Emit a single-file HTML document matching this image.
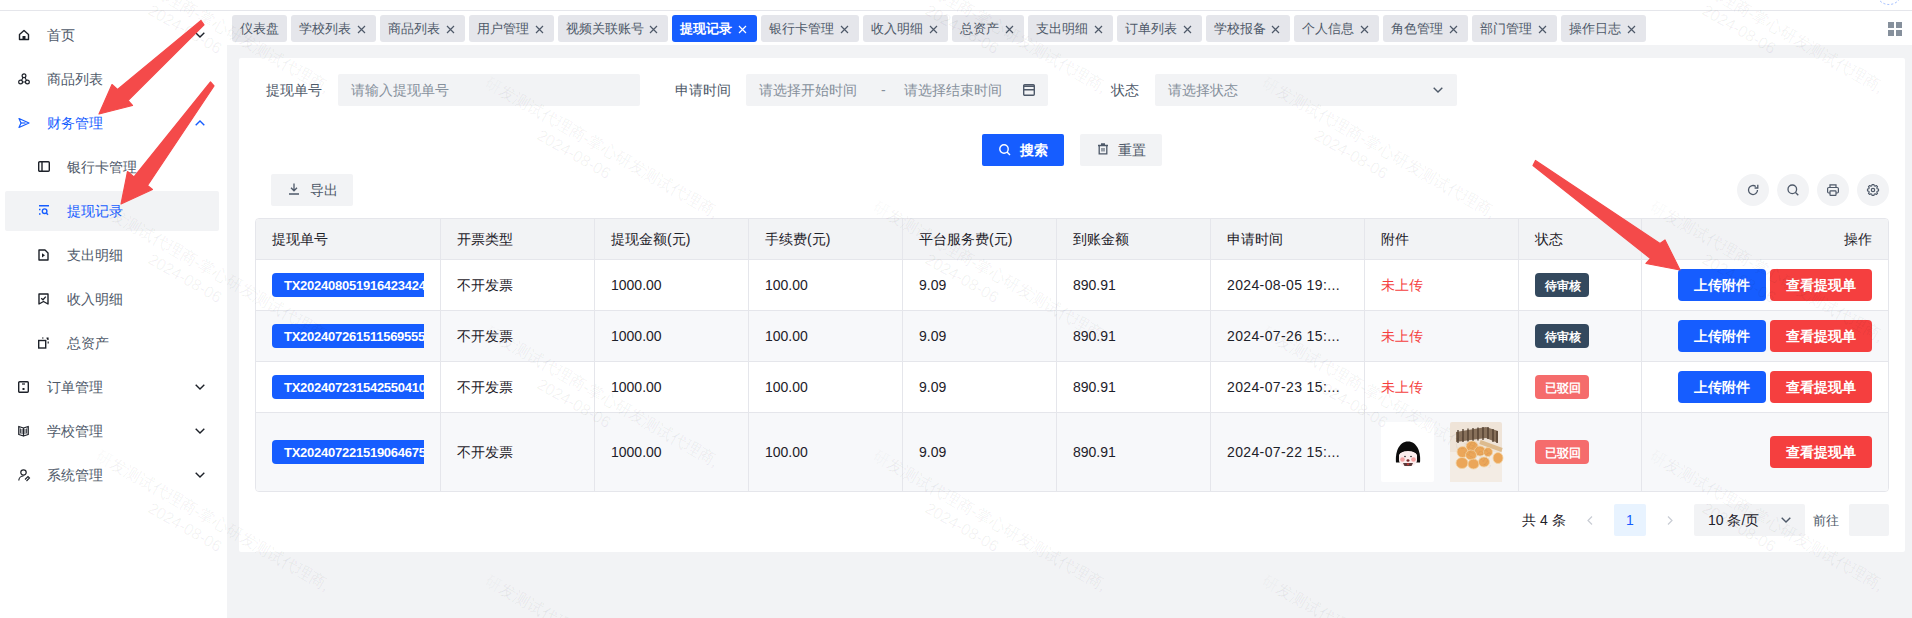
<!DOCTYPE html><html><head><meta charset="utf-8"><style>
*{box-sizing:border-box;margin:0;padding:0}
html,body{width:1912px;height:618px;overflow:hidden;background:#fff;font-family:"Liberation Sans",sans-serif;color:#1D2129}
.ab{position:absolute}
.t{position:absolute;white-space:nowrap;line-height:1}
svg{position:absolute;overflow:visible}
</style></head><body>

<div class="ab" style="left:0;top:10px;width:1912px;height:1px;background:#E5E6EB"></div>
<div class="ab" style="left:227px;top:45px;width:1685px;height:573px;background:#F2F3F5"></div>
<div class="ab" style="left:239px;top:58px;width:1666px;height:494px;background:#fff;border-radius:2px"></div>
<svg style="left:1870px;top:-30px" width="40" height="40" viewBox="0 0 40 40"><circle cx="19" cy="21.5" r="13" fill="none" stroke="#9DBBFF" stroke-width="1" stroke-dasharray="2 2"/></svg>
<div class="ab" style="left:5px;top:191px;width:214px;height:40px;background:#F2F3F5;border-radius:2px"></div>
<svg style="left:18px;top:29px" width="12" height="12" viewBox="0 0 12 12"><path d="M1.5 5.5 6 1.5l4.5 4v5h-9z" fill="none" stroke="#1D2129" stroke-width="1.4" stroke-linejoin="round"/><rect x="4.5" y="7" width="3" height="3.5" fill="#1D2129"/></svg>
<div class="t" style="left:47px;top:28px;font-size:14px;color:#4E5969">首页</div>
<svg style="left:195px;top:32px" width="10" height="6" viewBox="0 0 10 6"><path d="M0.7 0.7 5 5 9.3 0.7" fill="none" stroke="#1D2129" stroke-width="1.4"/></svg>
<svg style="left:18px;top:73px" width="12" height="12" viewBox="0 0 12 12"><path d="M6 2.5 3 8.5M6 2.5 9 8.5M3 9h6" stroke="#1D2129" stroke-width="1.1"/><circle cx="6" cy="2.8" r="1.9" fill="#fff" stroke="#1D2129" stroke-width="1.2"/><circle cx="2.6" cy="9" r="1.9" fill="#fff" stroke="#1D2129" stroke-width="1.2"/><circle cx="9.4" cy="9" r="1.9" fill="#fff" stroke="#1D2129" stroke-width="1.2"/></svg>
<div class="t" style="left:47px;top:72px;font-size:14px;color:#4E5969">商品列表</div>
<svg style="left:18px;top:117px" width="12" height="12" viewBox="0 0 12 12"><path d="M1 1.5 11 6 1 10.5 3 6z" fill="none" stroke="#165DFF" stroke-width="1.2" stroke-linejoin="round"/><path d="M3 6h4.5" stroke="#165DFF" stroke-width="1.2"/></svg>
<div class="t" style="left:47px;top:116px;font-size:14px;color:#165DFF">财务管理</div>
<svg style="left:195px;top:120px" width="10" height="6" viewBox="0 0 10 6"><path d="M0.7 5.3 5 1 9.3 5.3" fill="none" stroke="#165DFF" stroke-width="1.4"/></svg>
<svg style="left:38px;top:161px" width="12" height="12" viewBox="0 0 12 12"><rect x="0.7" y="0.7" width="10.6" height="9.6" rx="1" fill="none" stroke="#1D2129" stroke-width="1.4"/><path d="M4 1v9" stroke="#1D2129" stroke-width="1.4"/></svg>
<div class="t" style="left:67px;top:160px;font-size:14px;color:#4E5969">银行卡管理</div>
<svg style="left:38px;top:205px" width="12" height="12" viewBox="0 0 12 12"><path d="M1 0.8h10M1 4.5h1.5M1 9h1.5" stroke="#165DFF" stroke-width="1.4"/><circle cx="6.6" cy="6.2" r="2.3" fill="none" stroke="#165DFF" stroke-width="1.4"/><path d="M8.3 8 10 9.7" stroke="#165DFF" stroke-width="1.4"/></svg>
<div class="t" style="left:67px;top:204px;font-size:14px;color:#165DFF">提现记录</div>
<svg style="left:38px;top:249px" width="12" height="12" viewBox="0 0 12 12"><path d="M1 1h6l3 3v7H1z" fill="none" stroke="#1D2129" stroke-width="1.4" stroke-linejoin="round"/><path d="M4 4.2v4.2l3-2.1z" fill="#1D2129"/></svg>
<div class="t" style="left:67px;top:248px;font-size:14px;color:#4E5969">支出明细</div>
<svg style="left:38px;top:293px" width="12" height="12" viewBox="0 0 12 12"><path d="M1 1h9v10L5.5 8.5 1 11z" fill="none" stroke="#1D2129" stroke-width="1.4" stroke-linejoin="round"/><path d="M3.2 5.2 5 6.8 7.8 3.6" fill="none" stroke="#1D2129" stroke-width="1.3"/></svg>
<div class="t" style="left:67px;top:292px;font-size:14px;color:#4E5969">收入明细</div>
<svg style="left:38px;top:337px" width="12" height="12" viewBox="0 0 12 12"><rect x="0.7" y="3.5" width="7" height="7.5" fill="none" stroke="#1D2129" stroke-width="1.4"/><path d="M4 1h1.5M8.5 1h1.5v2M10.2 4.5v2" stroke="#1D2129" stroke-width="1.2"/></svg>
<div class="t" style="left:67px;top:336px;font-size:14px;color:#4E5969">总资产</div>
<svg style="left:18px;top:381px" width="12" height="12" viewBox="0 0 12 12"><rect x="0.7" y="0.7" width="9.6" height="10.6" rx="1" fill="none" stroke="#1D2129" stroke-width="1.4"/><path d="M4 3h3" stroke="#1D2129" stroke-width="1.2"/><rect x="4.5" y="7" width="2" height="2" fill="#1D2129"/></svg>
<div class="t" style="left:47px;top:380px;font-size:14px;color:#4E5969">订单管理</div>
<svg style="left:195px;top:384px" width="10" height="6" viewBox="0 0 10 6"><path d="M0.7 0.7 5 5 9.3 0.7" fill="none" stroke="#1D2129" stroke-width="1.4"/></svg>
<svg style="left:18px;top:425px" width="12" height="12" viewBox="0 0 12 12"><path d="M0.8 1.5 5.5 3v8L0.8 9.5zM10.2 1.5 5.5 3v8l4.7-1.5z" fill="none" stroke="#1D2129" stroke-width="1.3" stroke-linejoin="round"/><path d="M2.5 3.5v5M4 4v5M7 4v5M8.5 3.5v5" stroke="#1D2129" stroke-width="0.8"/></svg>
<div class="t" style="left:47px;top:424px;font-size:14px;color:#4E5969">学校管理</div>
<svg style="left:195px;top:428px" width="10" height="6" viewBox="0 0 10 6"><path d="M0.7 0.7 5 5 9.3 0.7" fill="none" stroke="#1D2129" stroke-width="1.4"/></svg>
<svg style="left:18px;top:469px" width="12" height="12" viewBox="0 0 12 12"><circle cx="5.5" cy="3.5" r="2.7" fill="none" stroke="#1D2129" stroke-width="1.2"/><path d="M0.8 11.5c0-2.5 2-4.5 4.7-4.5" fill="none" stroke="#1D2129" stroke-width="1.2"/><path d="M7 10.5l3-3 1.5 1.5-3 3" fill="none" stroke="#1D2129" stroke-width="1.1"/></svg>
<div class="t" style="left:47px;top:468px;font-size:14px;color:#4E5969">系统管理</div>
<svg style="left:195px;top:472px" width="10" height="6" viewBox="0 0 10 6"><path d="M0.7 0.7 5 5 9.3 0.7" fill="none" stroke="#1D2129" stroke-width="1.4"/></svg>
<div class="ab" style="left:232px;top:15px;width:55px;height:27px;background:#E5E6EB;border-radius:3px"></div>
<div class="t" style="left:240px;top:22px;font-size:13px;color:#4E5969;font-weight:normal">仪表盘</div>
<div class="ab" style="left:291px;top:15px;width:85px;height:27px;background:#E5E6EB;border-radius:3px"></div>
<div class="t" style="left:299px;top:22px;font-size:13px;color:#4E5969;font-weight:normal">学校列表</div>
<svg style="left:357px;top:25px" width="9" height="9" viewBox="0 0 9 9"><path d="M1 1 8 8M8 1 1 8" stroke="#4E5969" stroke-width="1.2"/></svg>
<div class="ab" style="left:380px;top:15px;width:85px;height:27px;background:#E5E6EB;border-radius:3px"></div>
<div class="t" style="left:388px;top:22px;font-size:13px;color:#4E5969;font-weight:normal">商品列表</div>
<svg style="left:446px;top:25px" width="9" height="9" viewBox="0 0 9 9"><path d="M1 1 8 8M8 1 1 8" stroke="#4E5969" stroke-width="1.2"/></svg>
<div class="ab" style="left:469px;top:15px;width:85px;height:27px;background:#E5E6EB;border-radius:3px"></div>
<div class="t" style="left:477px;top:22px;font-size:13px;color:#4E5969;font-weight:normal">用户管理</div>
<svg style="left:535px;top:25px" width="9" height="9" viewBox="0 0 9 9"><path d="M1 1 8 8M8 1 1 8" stroke="#4E5969" stroke-width="1.2"/></svg>
<div class="ab" style="left:558px;top:15px;width:110px;height:27px;background:#E5E6EB;border-radius:3px"></div>
<div class="t" style="left:566px;top:22px;font-size:13px;color:#4E5969;font-weight:normal">视频关联账号</div>
<svg style="left:649px;top:25px" width="9" height="9" viewBox="0 0 9 9"><path d="M1 1 8 8M8 1 1 8" stroke="#4E5969" stroke-width="1.2"/></svg>
<div class="ab" style="left:672px;top:15px;width:85px;height:27px;background:#165DFF;border-radius:3px"></div>
<div class="t" style="left:680px;top:22px;font-size:13px;color:#fff;font-weight:bold">提现记录</div>
<svg style="left:738px;top:25px" width="9" height="9" viewBox="0 0 9 9"><path d="M1 1 8 8M8 1 1 8" stroke="#fff" stroke-width="1.2"/></svg>
<div class="ab" style="left:761px;top:15px;width:98px;height:27px;background:#E5E6EB;border-radius:3px"></div>
<div class="t" style="left:769px;top:22px;font-size:13px;color:#4E5969;font-weight:normal">银行卡管理</div>
<svg style="left:840px;top:25px" width="9" height="9" viewBox="0 0 9 9"><path d="M1 1 8 8M8 1 1 8" stroke="#4E5969" stroke-width="1.2"/></svg>
<div class="ab" style="left:863px;top:15px;width:85px;height:27px;background:#E5E6EB;border-radius:3px"></div>
<div class="t" style="left:871px;top:22px;font-size:13px;color:#4E5969;font-weight:normal">收入明细</div>
<svg style="left:929px;top:25px" width="9" height="9" viewBox="0 0 9 9"><path d="M1 1 8 8M8 1 1 8" stroke="#4E5969" stroke-width="1.2"/></svg>
<div class="ab" style="left:952px;top:15px;width:72px;height:27px;background:#E5E6EB;border-radius:3px"></div>
<div class="t" style="left:960px;top:22px;font-size:13px;color:#4E5969;font-weight:normal">总资产</div>
<svg style="left:1005px;top:25px" width="9" height="9" viewBox="0 0 9 9"><path d="M1 1 8 8M8 1 1 8" stroke="#4E5969" stroke-width="1.2"/></svg>
<div class="ab" style="left:1028px;top:15px;width:85px;height:27px;background:#E5E6EB;border-radius:3px"></div>
<div class="t" style="left:1036px;top:22px;font-size:13px;color:#4E5969;font-weight:normal">支出明细</div>
<svg style="left:1094px;top:25px" width="9" height="9" viewBox="0 0 9 9"><path d="M1 1 8 8M8 1 1 8" stroke="#4E5969" stroke-width="1.2"/></svg>
<div class="ab" style="left:1117px;top:15px;width:85px;height:27px;background:#E5E6EB;border-radius:3px"></div>
<div class="t" style="left:1125px;top:22px;font-size:13px;color:#4E5969;font-weight:normal">订单列表</div>
<svg style="left:1183px;top:25px" width="9" height="9" viewBox="0 0 9 9"><path d="M1 1 8 8M8 1 1 8" stroke="#4E5969" stroke-width="1.2"/></svg>
<div class="ab" style="left:1206px;top:15px;width:84px;height:27px;background:#E5E6EB;border-radius:3px"></div>
<div class="t" style="left:1214px;top:22px;font-size:13px;color:#4E5969;font-weight:normal">学校报备</div>
<svg style="left:1271px;top:25px" width="9" height="9" viewBox="0 0 9 9"><path d="M1 1 8 8M8 1 1 8" stroke="#4E5969" stroke-width="1.2"/></svg>
<div class="ab" style="left:1294px;top:15px;width:85px;height:27px;background:#E5E6EB;border-radius:3px"></div>
<div class="t" style="left:1302px;top:22px;font-size:13px;color:#4E5969;font-weight:normal">个人信息</div>
<svg style="left:1360px;top:25px" width="9" height="9" viewBox="0 0 9 9"><path d="M1 1 8 8M8 1 1 8" stroke="#4E5969" stroke-width="1.2"/></svg>
<div class="ab" style="left:1383px;top:15px;width:85px;height:27px;background:#E5E6EB;border-radius:3px"></div>
<div class="t" style="left:1391px;top:22px;font-size:13px;color:#4E5969;font-weight:normal">角色管理</div>
<svg style="left:1449px;top:25px" width="9" height="9" viewBox="0 0 9 9"><path d="M1 1 8 8M8 1 1 8" stroke="#4E5969" stroke-width="1.2"/></svg>
<div class="ab" style="left:1472px;top:15px;width:85px;height:27px;background:#E5E6EB;border-radius:3px"></div>
<div class="t" style="left:1480px;top:22px;font-size:13px;color:#4E5969;font-weight:normal">部门管理</div>
<svg style="left:1538px;top:25px" width="9" height="9" viewBox="0 0 9 9"><path d="M1 1 8 8M8 1 1 8" stroke="#4E5969" stroke-width="1.2"/></svg>
<div class="ab" style="left:1561px;top:15px;width:85px;height:27px;background:#E5E6EB;border-radius:3px"></div>
<div class="t" style="left:1569px;top:22px;font-size:13px;color:#4E5969;font-weight:normal">操作日志</div>
<svg style="left:1627px;top:25px" width="9" height="9" viewBox="0 0 9 9"><path d="M1 1 8 8M8 1 1 8" stroke="#4E5969" stroke-width="1.2"/></svg>
<svg style="left:1888px;top:22px" width="14" height="14" viewBox="0 0 14 14"><g fill="#86909C"><rect x="0" y="0" width="6" height="6"/><rect x="8" y="0" width="6" height="6"/><rect x="0" y="8" width="6" height="6"/><rect x="8" y="8" width="6" height="6"/></g></svg>
<div class="t" style="left:266px;top:83px;font-size:14px;color:#4E5969">提现单号</div>
<div class="t" style="left:675px;top:83px;font-size:14px;color:#4E5969">申请时间</div>
<div class="t" style="left:1111px;top:83px;font-size:14px;color:#4E5969">状态</div>
<div class="ab" style="left:338px;top:74px;width:302px;height:32px;background:#F2F3F5;border-radius:2px"></div>
<div class="t" style="left:351px;top:83px;font-size:14px;color:#86909C">请输入提现单号</div>
<div class="ab" style="left:746px;top:74px;width:302px;height:32px;background:#F2F3F5;border-radius:2px"></div>
<div class="t" style="left:759px;top:83px;font-size:14px;color:#86909C">请选择开始时间</div>
<div class="t" style="left:881px;top:83px;font-size:14px;color:#86909C">-</div>
<div class="t" style="left:904px;top:83px;font-size:14px;color:#86909C">请选择结束时间</div>
<svg style="left:1023px;top:84px" width="12" height="12" viewBox="0 0 12 12"><rect x="0.7" y="0.7" width="10.6" height="10.6" rx="1" fill="none" stroke="#4E5969" stroke-width="1.4"/><path d="M1 5.8h10M0.7 2.2h10.6" stroke="#4E5969" stroke-width="1.4"/></svg>
<div class="ab" style="left:1155px;top:74px;width:302px;height:32px;background:#F2F3F5;border-radius:2px"></div>
<div class="t" style="left:1168px;top:83px;font-size:14px;color:#86909C">请选择状态</div>
<svg style="left:1433px;top:87px" width="10" height="6" viewBox="0 0 10 6"><path d="M0.7 0.7 5 5 9.3 0.7" fill="none" stroke="#4E5969" stroke-width="1.4"/></svg>
<div class="ab" style="left:982px;top:134px;width:82px;height:32px;background:#165DFF;border-radius:2px"></div>
<svg style="left:999px;top:144px" width="12" height="12" viewBox="0 0 12 12"><circle cx="5" cy="5" r="4.2" fill="none" stroke="#fff" stroke-width="1.4"/><path d="M8 8l3 3" stroke="#fff" stroke-width="1.4"/></svg>
<div class="t" style="left:1020px;top:143px;font-size:14px;color:#fff;font-weight:bold">搜索</div>
<div class="ab" style="left:1080px;top:134px;width:82px;height:32px;background:#F2F3F5;border-radius:2px"></div>
<svg style="left:1097px;top:143px" width="12" height="12" viewBox="0 0 12 12"><path d="M1 2.5h10M4 1h4" stroke="#4E5969" stroke-width="1.3"/><path d="M2.2 2.5v8.3h7.6V2.5" fill="none" stroke="#4E5969" stroke-width="1.3"/><path d="M5 5v3.5M7 5v3.5" stroke="#4E5969" stroke-width="1.1"/></svg>
<div class="t" style="left:1118px;top:143px;font-size:14px;color:#4E5969">重置</div>
<div class="ab" style="left:271px;top:174px;width:82px;height:32px;background:#F2F3F5;border-radius:2px"></div>
<svg style="left:288px;top:183px" width="12" height="12" viewBox="0 0 12 12"><path d="M6 0.5v7M3 4.8 6 7.8 9 4.8M1 11h10" fill="none" stroke="#4E5969" stroke-width="1.3"/></svg>
<div class="t" style="left:310px;top:183px;font-size:14px;color:#4E5969">导出</div>
<div class="ab" style="left:1737px;top:174px;width:32px;height:32px;border-radius:16px;background:#F2F3F5"></div>
<svg style="left:1747px;top:184px" width="12" height="12" viewBox="0 0 12 12"><path d="M10.5 6A4.5 4.5 0 1 1 8.8 2.5" fill="none" stroke="#4E5969" stroke-width="1.3"/><path d="M10.8 0.8v3.2H7.6" fill="none" stroke="#4E5969" stroke-width="1.3"/></svg>
<div class="ab" style="left:1777px;top:174px;width:32px;height:32px;border-radius:16px;background:#F2F3F5"></div>
<svg style="left:1787px;top:184px" width="12" height="12" viewBox="0 0 12 12"><circle cx="5.3" cy="5.3" r="4.3" fill="none" stroke="#4E5969" stroke-width="1.3"/><path d="M8.5 8.5 11.3 11.3" stroke="#4E5969" stroke-width="1.3"/></svg>
<div class="ab" style="left:1817px;top:174px;width:32px;height:32px;border-radius:16px;background:#F2F3F5"></div>
<svg style="left:1827px;top:184px" width="12" height="12" viewBox="0 0 12 12"><path d="M3 3.5V0.8h6v2.7" fill="none" stroke="#4E5969" stroke-width="1.2"/><rect x="0.6" y="3.5" width="10.8" height="5.5" rx="1.2" fill="none" stroke="#4E5969" stroke-width="1.2"/><rect x="3" y="6.8" width="6" height="4.5" rx="0.6" fill="#F2F3F5" stroke="#4E5969" stroke-width="1.2"/></svg>
<div class="ab" style="left:1857px;top:174px;width:32px;height:32px;border-radius:16px;background:#F2F3F5"></div>
<svg style="left:1867px;top:184px" width="12" height="12" viewBox="0 0 12 12"><path d="M10.14 4.83 L11.53 5.09 L11.53 6.91 L10.14 7.17 L9.76 8.10 L10.55 9.26 L9.26 10.55 L8.10 9.76 L7.17 10.14 L6.91 11.53 L5.09 11.53 L4.83 10.14 L3.90 9.76 L2.74 10.55 L1.45 9.26 L2.24 8.10 L1.86 7.17 L0.47 6.91 L0.47 5.09 L1.86 4.83 L2.24 3.90 L1.45 2.74 L2.74 1.45 L3.90 2.24 L4.83 1.86 L5.09 0.47 L6.91 0.47 L7.17 1.86 L8.10 2.24 L9.26 1.45 L10.55 2.74 L9.76 3.90Z" fill="none" stroke="#4E5969" stroke-width="1.1" stroke-linejoin="round"/><circle cx="6" cy="6" r="1.7" fill="none" stroke="#4E5969" stroke-width="1.2"/></svg>
<div class="ab" style="left:255px;top:218px;width:1634px;height:274px;border:1px solid #E5E6EB;border-radius:4px;overflow:hidden"></div>
<div class="ab" style="left:256px;top:219px;width:1632px;height:40px;background:#F2F3F5;border-radius:3px 3px 0 0"></div>
<div class="ab" style="left:256px;top:311px;width:1632px;height:50px;background:#F7F8FA"></div>
<div class="ab" style="left:256px;top:413px;width:1632px;height:78px;background:#F7F8FA;border-radius:0 0 3px 3px"></div>
<div class="ab" style="left:256px;top:259px;width:1632px;height:1px;background:#E5E6EB"></div>
<div class="ab" style="left:256px;top:310px;width:1632px;height:1px;background:#E5E6EB"></div>
<div class="ab" style="left:256px;top:361px;width:1632px;height:1px;background:#E5E6EB"></div>
<div class="ab" style="left:256px;top:412px;width:1632px;height:1px;background:#E5E6EB"></div>
<div class="ab" style="left:440px;top:219px;width:1px;height:272px;background:#E5E6EB"></div>
<div class="ab" style="left:594px;top:219px;width:1px;height:272px;background:#E5E6EB"></div>
<div class="ab" style="left:748px;top:219px;width:1px;height:272px;background:#E5E6EB"></div>
<div class="ab" style="left:902px;top:219px;width:1px;height:272px;background:#E5E6EB"></div>
<div class="ab" style="left:1056px;top:219px;width:1px;height:272px;background:#E5E6EB"></div>
<div class="ab" style="left:1210px;top:219px;width:1px;height:272px;background:#E5E6EB"></div>
<div class="ab" style="left:1364px;top:219px;width:1px;height:272px;background:#E5E6EB"></div>
<div class="ab" style="left:1518px;top:219px;width:1px;height:272px;background:#E5E6EB"></div>
<div class="ab" style="left:1641px;top:219px;width:1px;height:272px;background:#E5E6EB"></div>
<div class="t" style="left:272px;top:232px;font-size:14px;color:#1D2129">提现单号</div>
<div class="t" style="left:457px;top:232px;font-size:14px;color:#1D2129">开票类型</div>
<div class="t" style="left:611px;top:232px;font-size:14px;color:#1D2129">提现金额(元)</div>
<div class="t" style="left:765px;top:232px;font-size:14px;color:#1D2129">手续费(元)</div>
<div class="t" style="left:919px;top:232px;font-size:14px;color:#1D2129">平台服务费(元)</div>
<div class="t" style="left:1073px;top:232px;font-size:14px;color:#1D2129">到账金额</div>
<div class="t" style="left:1227px;top:232px;font-size:14px;color:#1D2129">申请时间</div>
<div class="t" style="left:1381px;top:232px;font-size:14px;color:#1D2129">附件</div>
<div class="t" style="left:1535px;top:232px;font-size:14px;color:#1D2129">状态</div>
<div class="t" style="left:1844px;top:232px;font-size:14px;color:#1D2129">操作</div>
<div class="ab" style="left:272px;top:273px;width:152px;height:24px;overflow:hidden"><div class="ab" style="left:0;top:0;width:170px;height:24px;background:#165DFF;border-radius:4px"></div><div class="t" style="left:12px;top:6px;font-size:13px;color:#fff;font-weight:bold;letter-spacing:-0.25px">TX202408051916423424</div></div>
<div class="t" style="left:457px;top:278px;font-size:14px;color:#1D2129">不开发票</div>
<div class="t" style="left:611px;top:278px;font-size:14px;color:#1D2129">1000.00</div>
<div class="t" style="left:765px;top:278px;font-size:14px;color:#1D2129">100.00</div>
<div class="t" style="left:919px;top:278px;font-size:14px;color:#1D2129">9.09</div>
<div class="t" style="left:1073px;top:278px;font-size:14px;color:#1D2129">890.91</div>
<div class="t" style="left:1227px;top:278px;font-size:14px;color:#1D2129;letter-spacing:0.37px">2024-08-05 19:...</div>
<div class="t" style="left:1381px;top:278px;font-size:14px;color:#F53F3F">未上传</div>
<div class="ab" style="left:1535px;top:273px;width:54px;height:24px;background:#34495E;border-radius:4px"></div>
<div class="t" style="left:1544.5px;top:279.5px;font-size:11.7px;color:#fff;font-weight:bold">待审核</div>
<div class="ab" style="left:1678px;top:269px;width:88px;height:32px;background:#165DFF;border-radius:4px"></div>
<div class="t" style="left:1694px;top:278px;font-size:14px;color:#fff;font-weight:bold">上传附件</div>
<div class="ab" style="left:1770px;top:269px;width:102px;height:32px;background:#F53F3F;border-radius:4px"></div>
<div class="t" style="left:1786px;top:278px;font-size:14px;color:#fff;font-weight:bold">查看提现单</div>
<div class="ab" style="left:272px;top:324px;width:152px;height:24px;overflow:hidden"><div class="ab" style="left:0;top:0;width:170px;height:24px;background:#165DFF;border-radius:4px"></div><div class="t" style="left:12px;top:6px;font-size:13px;color:#fff;font-weight:bold;letter-spacing:-0.25px">TX202407261511569555</div></div>
<div class="t" style="left:457px;top:329px;font-size:14px;color:#1D2129">不开发票</div>
<div class="t" style="left:611px;top:329px;font-size:14px;color:#1D2129">1000.00</div>
<div class="t" style="left:765px;top:329px;font-size:14px;color:#1D2129">100.00</div>
<div class="t" style="left:919px;top:329px;font-size:14px;color:#1D2129">9.09</div>
<div class="t" style="left:1073px;top:329px;font-size:14px;color:#1D2129">890.91</div>
<div class="t" style="left:1227px;top:329px;font-size:14px;color:#1D2129;letter-spacing:0.37px">2024-07-26 15:...</div>
<div class="t" style="left:1381px;top:329px;font-size:14px;color:#F53F3F">未上传</div>
<div class="ab" style="left:1535px;top:324px;width:54px;height:24px;background:#34495E;border-radius:4px"></div>
<div class="t" style="left:1544.5px;top:330.5px;font-size:11.7px;color:#fff;font-weight:bold">待审核</div>
<div class="ab" style="left:1678px;top:320px;width:88px;height:32px;background:#165DFF;border-radius:4px"></div>
<div class="t" style="left:1694px;top:329px;font-size:14px;color:#fff;font-weight:bold">上传附件</div>
<div class="ab" style="left:1770px;top:320px;width:102px;height:32px;background:#F53F3F;border-radius:4px"></div>
<div class="t" style="left:1786px;top:329px;font-size:14px;color:#fff;font-weight:bold">查看提现单</div>
<div class="ab" style="left:272px;top:375px;width:152px;height:24px;overflow:hidden"><div class="ab" style="left:0;top:0;width:170px;height:24px;background:#165DFF;border-radius:4px"></div><div class="t" style="left:12px;top:6px;font-size:13px;color:#fff;font-weight:bold;letter-spacing:-0.25px">TX202407231542550410</div></div>
<div class="t" style="left:457px;top:380px;font-size:14px;color:#1D2129">不开发票</div>
<div class="t" style="left:611px;top:380px;font-size:14px;color:#1D2129">1000.00</div>
<div class="t" style="left:765px;top:380px;font-size:14px;color:#1D2129">100.00</div>
<div class="t" style="left:919px;top:380px;font-size:14px;color:#1D2129">9.09</div>
<div class="t" style="left:1073px;top:380px;font-size:14px;color:#1D2129">890.91</div>
<div class="t" style="left:1227px;top:380px;font-size:14px;color:#1D2129;letter-spacing:0.37px">2024-07-23 15:...</div>
<div class="t" style="left:1381px;top:380px;font-size:14px;color:#F53F3F">未上传</div>
<div class="ab" style="left:1535px;top:375px;width:54px;height:24px;background:#F56C6C;border-radius:4px"></div>
<div class="t" style="left:1544.5px;top:381.5px;font-size:11.7px;color:#fff;font-weight:bold">已驳回</div>
<div class="ab" style="left:1678px;top:371px;width:88px;height:32px;background:#165DFF;border-radius:4px"></div>
<div class="t" style="left:1694px;top:380px;font-size:14px;color:#fff;font-weight:bold">上传附件</div>
<div class="ab" style="left:1770px;top:371px;width:102px;height:32px;background:#F53F3F;border-radius:4px"></div>
<div class="t" style="left:1786px;top:380px;font-size:14px;color:#fff;font-weight:bold">查看提现单</div>
<div class="ab" style="left:272px;top:440px;width:152px;height:24px;overflow:hidden"><div class="ab" style="left:0;top:0;width:170px;height:24px;background:#165DFF;border-radius:4px"></div><div class="t" style="left:12px;top:6px;font-size:13px;color:#fff;font-weight:bold;letter-spacing:-0.25px">TX202407221519064675</div></div>
<div class="t" style="left:457px;top:445px;font-size:14px;color:#1D2129">不开发票</div>
<div class="t" style="left:611px;top:445px;font-size:14px;color:#1D2129">1000.00</div>
<div class="t" style="left:765px;top:445px;font-size:14px;color:#1D2129">100.00</div>
<div class="t" style="left:919px;top:445px;font-size:14px;color:#1D2129">9.09</div>
<div class="t" style="left:1073px;top:445px;font-size:14px;color:#1D2129">890.91</div>
<div class="t" style="left:1227px;top:445px;font-size:14px;color:#1D2129;letter-spacing:0.37px">2024-07-22 15:...</div>
<div class="ab" style="left:1381px;top:422px;width:53px;height:60px;background:#fff;border-radius:2px"></div>
<svg style="left:1381px;top:422px" width="53" height="60" viewBox="0 0 53 60">
<path d="M15 40.5C14 30 18 19.5 27 19.5S40 30 39 40.5z" fill="#0d0d0d"/>
<path d="M18 33c1-3 4-4.5 9-4.5s8 1.5 9 4.5v5c0 4-4 6.5-9 6.5s-9-2.5-9-6.5z" fill="#fbeeee"/>
<path d="M17 33c2-2 5-4 10-4s8 2 10 4c0-4-4-7-10-7s-10 3-10 7z" fill="#0d0d0d"/>
<circle cx="21.5" cy="37.5" r="2.3" fill="#f3a2a2"/><circle cx="32.5" cy="37.5" r="2.3" fill="#f3a2a2"/>
<circle cx="24" cy="34.5" r="0.8" fill="#222"/><circle cx="30" cy="34.5" r="0.8" fill="#222"/>
<ellipse cx="27" cy="38.5" rx="1.5" ry="1.2" fill="#7a2b2b"/>
<path d="M22 41h10l-1.5 3h-7z" fill="#5a3a3a"/><path d="M25.5 41.5h3l-1.5 2z" fill="#d33"/>
</svg>
<svg style="left:1450px;top:422px" width="52" height="60" viewBox="0 0 52 60">

<rect width="52" height="60" rx="2" fill="#efe4d8"/><rect y="30" width="52" height="30" fill="#f3ece4"/>
<path d="M6 10l30-5 12 4v12L36 16 6 20z" fill="#7b634d" opacity="0.9"/>
<path d="M8 8v13M13 7v13M18 6.5v13M23 6v13M28 5.5v13M33 5v13M38 5v12M43 7v13M47 9v12" stroke="#4e3b2c" stroke-width="1.3"/>
<path d="M30 20l22 8" stroke="#d9b27c" stroke-width="4" opacity="0.8"/>
<g fill="#eba659" stroke="#f2d3a3" stroke-width="0.8"><ellipse cx="22" cy="24.5" rx="6" ry="5.5"/><ellipse cx="30" cy="29" rx="5.5" ry="5"/><ellipse cx="12.5" cy="30" rx="5.5" ry="5.5"/><ellipse cx="21" cy="33" rx="5.5" ry="5"/><ellipse cx="38" cy="30" rx="4.5" ry="4.5"/>
<ellipse cx="12" cy="41" rx="6" ry="5.5"/><ellipse cx="23.5" cy="42" rx="5.5" ry="5"/><ellipse cx="34" cy="40" rx="5.5" ry="5"/><ellipse cx="48" cy="36" rx="5" ry="5.5"/></g>
</svg>
<div class="ab" style="left:1535px;top:440px;width:54px;height:24px;background:#F56C6C;border-radius:4px"></div>
<div class="t" style="left:1544.5px;top:446.5px;font-size:11.7px;color:#fff;font-weight:bold">已驳回</div>
<div class="ab" style="left:1770px;top:436px;width:102px;height:32px;background:#F53F3F;border-radius:4px"></div>
<div class="t" style="left:1786px;top:445px;font-size:14px;color:#fff;font-weight:bold">查看提现单</div>
<div class="t" style="left:1522px;top:513px;font-size:14px;color:#1D2129">共 4 条</div>
<svg style="left:1587px;top:516px" width="6" height="9" viewBox="0 0 6 9"><path d="M5 0.5 1 4.5 5 8.5" fill="none" stroke="#C9CDD4" stroke-width="1.2"/></svg>
<div class="ab" style="left:1614px;top:504px;width:32px;height:32px;background:#E8F3FF;border-radius:2px"></div>
<div class="t" style="left:1626px;top:513px;font-size:14px;color:#165DFF">1</div>
<svg style="left:1667px;top:516px" width="6" height="9" viewBox="0 0 6 9"><path d="M1 0.5 5 4.5 1 8.5" fill="none" stroke="#C9CDD4" stroke-width="1.2"/></svg>
<div class="ab" style="left:1694px;top:504px;width:111px;height:32px;background:#F2F3F5;border-radius:2px"></div>
<div class="t" style="left:1708px;top:513px;font-size:14px;color:#1D2129">10 条/页</div>
<svg style="left:1781px;top:517px" width="10" height="6" viewBox="0 0 10 6"><path d="M0.7 0.7 5 5 9.3 0.7" fill="none" stroke="#4E5969" stroke-width="1.4"/></svg>
<div class="t" style="left:1813px;top:514px;font-size:13px;color:#4E5969">前往</div>
<div class="ab" style="left:1849px;top:504px;width:40px;height:32px;background:#F2F3F5;border-radius:2px"></div>
<div class="ab" style="left:187.0px;top:32.0px;width:0;height:0;transform:rotate(30deg);pointer-events:none"><div class="t" style="left:-115px;top:-29.5px;font-size:16px;color:rgba(0,0,0,0.06)"><span style="opacity:0.4">研</span>发测试代理商-掌心研发测试代理商,</div><div class="t" style="left:-44px;top:-9.5px;font-size:16px;color:rgba(0,0,0,0.06)">2024-08-06</div></div>
<div class="ab" style="left:187.0px;top:281.0px;width:0;height:0;transform:rotate(30deg);pointer-events:none"><div class="t" style="left:-115px;top:-29.5px;font-size:16px;color:rgba(0,0,0,0.06)"><span style="opacity:0.4">研</span>发测试代理商-掌心研发测试代理商,</div><div class="t" style="left:-44px;top:-9.5px;font-size:16px;color:rgba(0,0,0,0.06)">2024-08-06</div></div>
<div class="ab" style="left:187.0px;top:530.0px;width:0;height:0;transform:rotate(30deg);pointer-events:none"><div class="t" style="left:-115px;top:-29.5px;font-size:16px;color:rgba(0,0,0,0.06)"><span style="opacity:0.4">研</span>发测试代理商-掌心研发测试代理商,</div><div class="t" style="left:-44px;top:-9.5px;font-size:16px;color:rgba(0,0,0,0.06)">2024-08-06</div></div>
<div class="ab" style="left:187.0px;top:779.0px;width:0;height:0;transform:rotate(30deg);pointer-events:none"><div class="t" style="left:-115px;top:-29.5px;font-size:16px;color:rgba(0,0,0,0.06)"><span style="opacity:0.4">研</span>发测试代理商-掌心研发测试代理商,</div><div class="t" style="left:-44px;top:-9.5px;font-size:16px;color:rgba(0,0,0,0.06)">2024-08-06</div></div>
<div class="ab" style="left:575.5px;top:-92.5px;width:0;height:0;transform:rotate(30deg);pointer-events:none"><div class="t" style="left:-115px;top:-29.5px;font-size:16px;color:rgba(0,0,0,0.06)"><span style="opacity:0.4">研</span>发测试代理商-掌心研发测试代理商,</div><div class="t" style="left:-44px;top:-9.5px;font-size:16px;color:rgba(0,0,0,0.06)">2024-08-06</div></div>
<div class="ab" style="left:575.5px;top:156.5px;width:0;height:0;transform:rotate(30deg);pointer-events:none"><div class="t" style="left:-115px;top:-29.5px;font-size:16px;color:rgba(0,0,0,0.06)"><span style="opacity:0.4">研</span>发测试代理商-掌心研发测试代理商,</div><div class="t" style="left:-44px;top:-9.5px;font-size:16px;color:rgba(0,0,0,0.06)">2024-08-06</div></div>
<div class="ab" style="left:575.5px;top:405.5px;width:0;height:0;transform:rotate(30deg);pointer-events:none"><div class="t" style="left:-115px;top:-29.5px;font-size:16px;color:rgba(0,0,0,0.06)"><span style="opacity:0.4">研</span>发测试代理商-掌心研发测试代理商,</div><div class="t" style="left:-44px;top:-9.5px;font-size:16px;color:rgba(0,0,0,0.06)">2024-08-06</div></div>
<div class="ab" style="left:575.5px;top:654.5px;width:0;height:0;transform:rotate(30deg);pointer-events:none"><div class="t" style="left:-115px;top:-29.5px;font-size:16px;color:rgba(0,0,0,0.06)"><span style="opacity:0.4">研</span>发测试代理商-掌心研发测试代理商,</div><div class="t" style="left:-44px;top:-9.5px;font-size:16px;color:rgba(0,0,0,0.06)">2024-08-06</div></div>
<div class="ab" style="left:964.0px;top:32.0px;width:0;height:0;transform:rotate(30deg);pointer-events:none"><div class="t" style="left:-115px;top:-29.5px;font-size:16px;color:rgba(0,0,0,0.06)"><span style="opacity:0.4">研</span>发测试代理商-掌心研发测试代理商,</div><div class="t" style="left:-44px;top:-9.5px;font-size:16px;color:rgba(0,0,0,0.06)">2024-08-06</div></div>
<div class="ab" style="left:964.0px;top:281.0px;width:0;height:0;transform:rotate(30deg);pointer-events:none"><div class="t" style="left:-115px;top:-29.5px;font-size:16px;color:rgba(0,0,0,0.06)"><span style="opacity:0.4">研</span>发测试代理商-掌心研发测试代理商,</div><div class="t" style="left:-44px;top:-9.5px;font-size:16px;color:rgba(0,0,0,0.06)">2024-08-06</div></div>
<div class="ab" style="left:964.0px;top:530.0px;width:0;height:0;transform:rotate(30deg);pointer-events:none"><div class="t" style="left:-115px;top:-29.5px;font-size:16px;color:rgba(0,0,0,0.06)"><span style="opacity:0.4">研</span>发测试代理商-掌心研发测试代理商,</div><div class="t" style="left:-44px;top:-9.5px;font-size:16px;color:rgba(0,0,0,0.06)">2024-08-06</div></div>
<div class="ab" style="left:964.0px;top:779.0px;width:0;height:0;transform:rotate(30deg);pointer-events:none"><div class="t" style="left:-115px;top:-29.5px;font-size:16px;color:rgba(0,0,0,0.06)"><span style="opacity:0.4">研</span>发测试代理商-掌心研发测试代理商,</div><div class="t" style="left:-44px;top:-9.5px;font-size:16px;color:rgba(0,0,0,0.06)">2024-08-06</div></div>
<div class="ab" style="left:1352.5px;top:-92.5px;width:0;height:0;transform:rotate(30deg);pointer-events:none"><div class="t" style="left:-115px;top:-29.5px;font-size:16px;color:rgba(0,0,0,0.06)"><span style="opacity:0.4">研</span>发测试代理商-掌心研发测试代理商,</div><div class="t" style="left:-44px;top:-9.5px;font-size:16px;color:rgba(0,0,0,0.06)">2024-08-06</div></div>
<div class="ab" style="left:1352.5px;top:156.5px;width:0;height:0;transform:rotate(30deg);pointer-events:none"><div class="t" style="left:-115px;top:-29.5px;font-size:16px;color:rgba(0,0,0,0.06)"><span style="opacity:0.4">研</span>发测试代理商-掌心研发测试代理商,</div><div class="t" style="left:-44px;top:-9.5px;font-size:16px;color:rgba(0,0,0,0.06)">2024-08-06</div></div>
<div class="ab" style="left:1352.5px;top:405.5px;width:0;height:0;transform:rotate(30deg);pointer-events:none"><div class="t" style="left:-115px;top:-29.5px;font-size:16px;color:rgba(0,0,0,0.06)"><span style="opacity:0.4">研</span>发测试代理商-掌心研发测试代理商,</div><div class="t" style="left:-44px;top:-9.5px;font-size:16px;color:rgba(0,0,0,0.06)">2024-08-06</div></div>
<div class="ab" style="left:1352.5px;top:654.5px;width:0;height:0;transform:rotate(30deg);pointer-events:none"><div class="t" style="left:-115px;top:-29.5px;font-size:16px;color:rgba(0,0,0,0.06)"><span style="opacity:0.4">研</span>发测试代理商-掌心研发测试代理商,</div><div class="t" style="left:-44px;top:-9.5px;font-size:16px;color:rgba(0,0,0,0.06)">2024-08-06</div></div>
<div class="ab" style="left:1741.0px;top:32.0px;width:0;height:0;transform:rotate(30deg);pointer-events:none"><div class="t" style="left:-115px;top:-29.5px;font-size:16px;color:rgba(0,0,0,0.06)"><span style="opacity:0.4">研</span>发测试代理商-掌心研发测试代理商,</div><div class="t" style="left:-44px;top:-9.5px;font-size:16px;color:rgba(0,0,0,0.06)">2024-08-06</div></div>
<div class="ab" style="left:1741.0px;top:281.0px;width:0;height:0;transform:rotate(30deg);pointer-events:none"><div class="t" style="left:-115px;top:-29.5px;font-size:16px;color:rgba(0,0,0,0.06)"><span style="opacity:0.4">研</span>发测试代理商-掌心研发测试代理商,</div><div class="t" style="left:-44px;top:-9.5px;font-size:16px;color:rgba(0,0,0,0.06)">2024-08-06</div></div>
<div class="ab" style="left:1741.0px;top:530.0px;width:0;height:0;transform:rotate(30deg);pointer-events:none"><div class="t" style="left:-115px;top:-29.5px;font-size:16px;color:rgba(0,0,0,0.06)"><span style="opacity:0.4">研</span>发测试代理商-掌心研发测试代理商,</div><div class="t" style="left:-44px;top:-9.5px;font-size:16px;color:rgba(0,0,0,0.06)">2024-08-06</div></div>
<div class="ab" style="left:1741.0px;top:779.0px;width:0;height:0;transform:rotate(30deg);pointer-events:none"><div class="t" style="left:-115px;top:-29.5px;font-size:16px;color:rgba(0,0,0,0.06)"><span style="opacity:0.4">研</span>发测试代理商-掌心研发测试代理商,</div><div class="t" style="left:-44px;top:-9.5px;font-size:16px;color:rgba(0,0,0,0.06)">2024-08-06</div></div>
<svg style="left:0;top:0" width="1912" height="618" viewBox="0 0 1912 618">
<path d="M201 20.5 L204 24.8 L128 100.5 L132.5 105.5 L99 114 L112 84.5 L117.5 89.5 Z" fill="#F44A4A" stroke="#F44A4A" stroke-width="1.2" stroke-linejoin="round"/>
<path d="M210.5 82 L214 86 L147.5 185.5 L152.5 189.5 L121 204 L127.5 171.5 L134 177 Z" fill="#F44A4A" stroke="#F44A4A" stroke-width="1.2" stroke-linejoin="round"/>
<path d="M1535.5 160.5 L1533 165.5 L1650.5 258.5 L1646 263.5 L1680 270 L1665 240 L1660 243.5 Z" fill="#F44A4A" stroke="#F44A4A" stroke-width="1.2" stroke-linejoin="round"/>
</svg>
</body></html>
